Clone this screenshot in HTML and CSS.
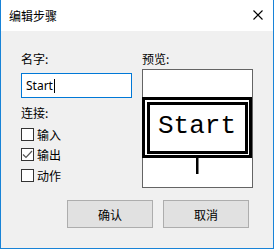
FILE: index.html
```html
<!DOCTYPE html>
<html lang="zh">

<head>
  <meta charset='utf-8'>
  <title>编辑步骤</title>
  <meta name='viewport' content='width=device-width, initial-scale=1'>
  <link rel="stylesheet" href="styles.css">
</head>

<body>
  <div id="win">
    <div id="titleBar">
      <span id="title">编辑步骤</span>
      <svg id="closeBtn" width="10" height="10" viewBox="0 0 10 10">
        <path d="M0.5 0.5 L9.5 9.5 M9.5 0.5 L0.5 9.5" stroke="#000" stroke-width="1.1" fill="none" />
      </svg>
    </div>
    <div id="mainCont">
      <div class="col">
        <div class="label">名字:</div>
        <div id="nameBox"><span>Start</span><span id="caret"></span></div>
        <div class="label" id="linkLabel">连接:</div>
        <div class="check"><span class="box"></span>输入</div>
        <div class="check"><span class="box">
            <svg width="11" height="11" viewBox="0 0 11 11">
              <path d="M1 5.5 L4 8.5 L10 2" stroke="#555" stroke-width="1.2" fill="none" />
            </svg>
          </span>输出</div>
        <div class="check"><span class="box"></span>动作</div>
      </div>
      <div class="col">
        <div class="label">预览:</div>
        <div id="preview">
          <!-- drawn relative to the box's inner corner -->
          <svg id="previewSvg" width="109" height="117" viewBox="0 0 109 117">
            <rect x="0.5" y="28.5" width="107" height="58" fill="#fff" stroke="#000" stroke-width="3" />
            <rect x="5.5" y="33.5" width="98" height="49" fill="none" stroke="#000" stroke-width="3" />
            <text x="54" y="63" text-anchor="middle" class="blockText">Start</text>
            <rect x="53" y="88" width="2.5" height="16" fill="#000" />
          </svg>
        </div>
      </div>
    </div>
    <div id="buttons">
      <button class="btn">确认</button>
      <button class="btn">取消</button>
    </div>
  </div>
</body>

</html>
```

FILE: styles.css
```css
* {
  box-sizing: border-box;
  font-family: "Noto Sans", "Noto Sans CJK SC", sans-serif;
}

body {
  margin: 0;
  background-color: #f0f0f0;
  color: #000;
}

#win {
  width: 274px;
  height: 249px;
  border: 1px solid #1883d7;
  border-top: none;
  display: flex;
  flex-direction: column;
  background-color: #f0f0f0;
}

#titleBar {
  height: 31px;
  background-color: #fff;
  display: flex;
  align-items: center;
  justify-content: space-between;
  padding: 0 10px 1px 8px;
}

#title {
  font-size: 12px;
  font-family: "Noto Sans CJK SC", sans-serif;
}

#mainCont {
  display: grid;
  grid-template-columns: 111px 111px;
  column-gap: 10px;
  padding: 20px 0 0 20px;
}

.col {
  display: flex;
  flex-direction: column;
}

.label {
  font-size: 12px;
  line-height: 16px;
  height: 16px;
  font-family: "Noto Sans CJK SC", sans-serif;
}

#nameBox {
  margin-top: 6px;
  height: 25px;
  background-color: #fff;
  border: 1px solid #0078d7;
  display: flex;
  align-items: center;
  padding-left: 4px;
  font-size: 12px;
}

#caret {
  display: inline-block;
  width: 1px;
  height: 14px;
  background-color: #000;
  margin-left: 1px;
}

#linkLabel {
  margin-top: 7px;
  margin-bottom: 3px;
}

.check {
  display: flex;
  align-items: center;
  height: 20.5px;
  font-size: 12px;
  font-family: "Noto Sans CJK SC", sans-serif;
  gap: 3px;
}

.box {
  width: 13px;
  height: 13px;
  border: 1px solid #333;
  background-color: #fff;
  display: flex;
  align-items: center;
  justify-content: center;
}

#preview {
  margin-top: 2px;
  width: 111px;
  height: 119px;
  border: 1px solid #646464;
  background-color: #fff;
}

#previewSvg {
  display: block;
  overflow: visible;
}

.blockText {
  font-family: "Liberation Mono", monospace;
  font-size: 26px;
}

#buttons {
  display: flex;
  justify-content: flex-end;
  gap: 10px;
  padding: 12px 24px 0 0;
}

.btn {
  width: 86px;
  height: 28px;
  border: 1px solid #adadad;
  background-color: #e1e1e1;
  font-size: 12px;
  font-family: "Noto Sans CJK SC", sans-serif;
  padding: 0;
  color: #000;
}
```
